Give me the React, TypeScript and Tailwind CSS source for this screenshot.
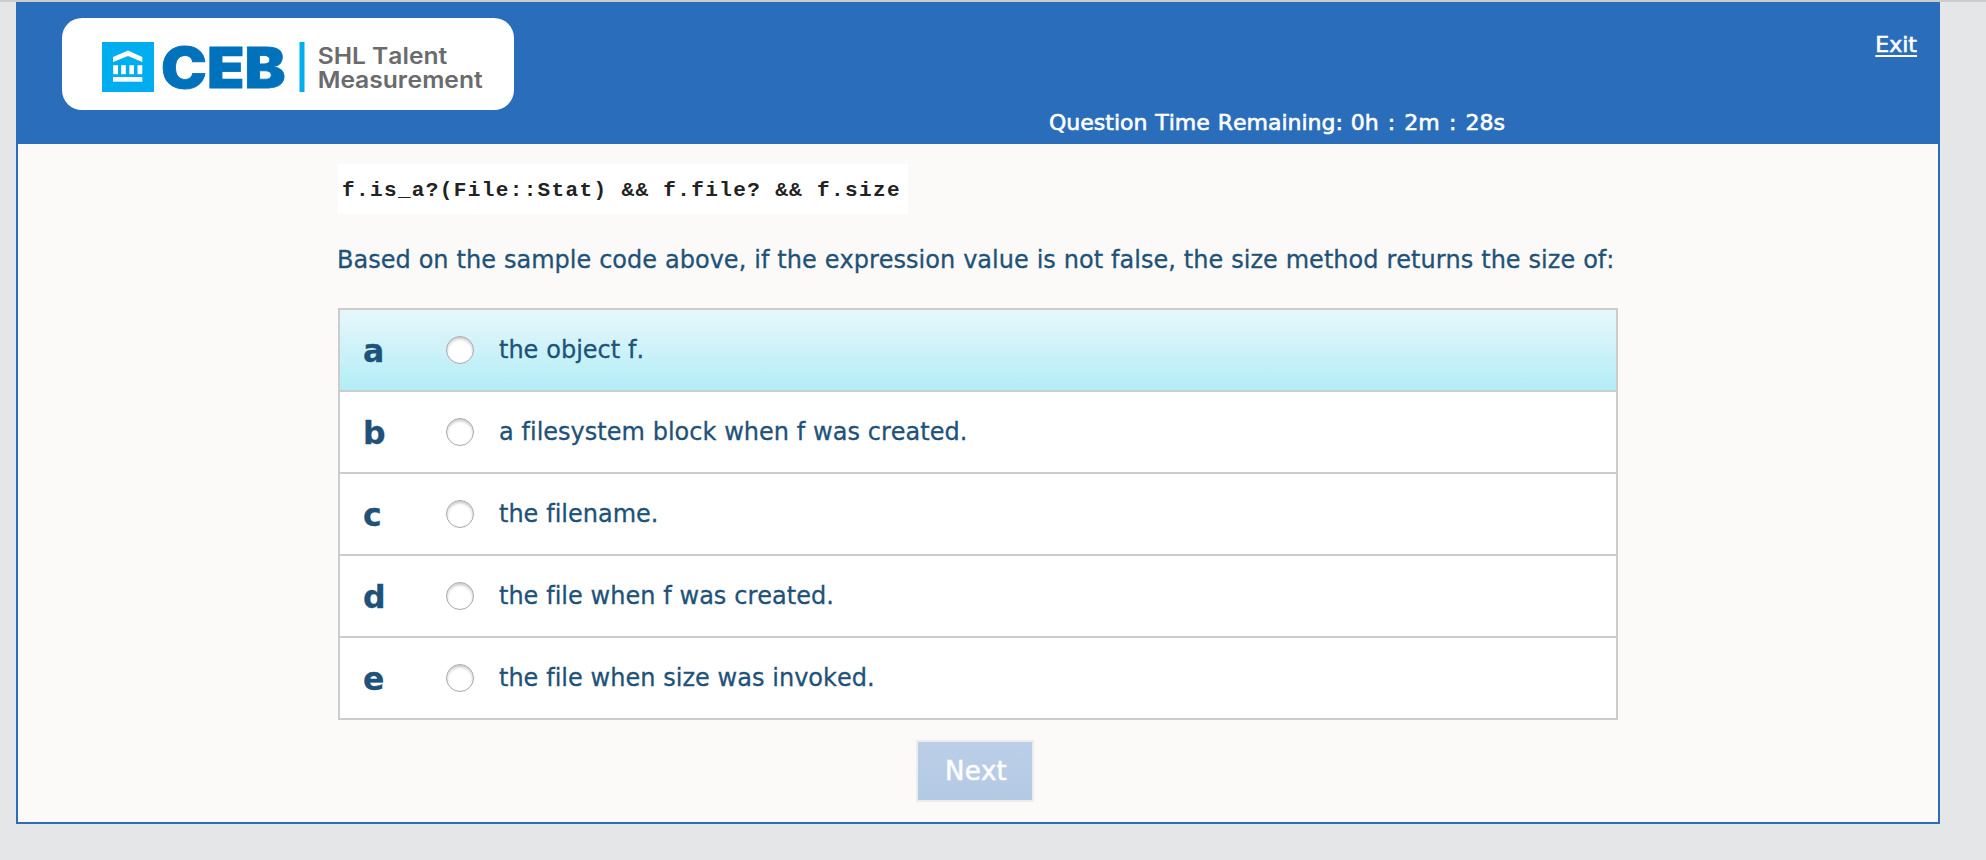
type Option = { key: string; text: string; selected?: boolean };

const options: Option[] = [
  { key: "a", text: "the object f.", selected: true },
  { key: "b", text: "a filesystem block when f was created." },
  { key: "c", text: "the filename." },
  { key: "d", text: "the file when f was created." },
  { key: "e", text: "the file when size was invoked." },
];

function Logo() {
  return (
    <div className="ml-[46px] mt-[16px] h-[92px] w-[452px] rounded-[20px] bg-white">
      <svg width="452" height="92" viewBox="62 18 452 92" role="img" aria-label="CEB SHL Talent Measurement">
        <rect x="102" y="42" width="52" height="50" fill="#00aeef" />
        <g fill="#fff">
          <path d="M128 50.5 L142.3 57 V62 L128 56 L113 62 V57 Z" />
          <rect x="113.2" y="65.2" width="4.8" height="9" />
          <rect x="121.2" y="65.2" width="4.6" height="9" />
          <rect x="129.4" y="65.2" width="4.6" height="9" />
          <rect x="137.5" y="65.2" width="4.8" height="9" />
          <rect x="113" y="77" width="29.3" height="4.7" />
        </g>
        <g fontFamily="Inter, sans-serif">
          <text x="161" y="87.7" fontSize="56" fontWeight="900" fill="#0072bc" stroke="#0072bc" strokeWidth="0.8" textLength="124.5" lengthAdjust="spacingAndGlyphs">CEB</text>
          <g fontSize="23" fontWeight="600" fill="#6a6b6d">
            <text x="317.7" y="63.7" textLength="129.5" lengthAdjust="spacingAndGlyphs">SHL Talent</text>
            <text x="317.7" y="88.3" textLength="165" lengthAdjust="spacingAndGlyphs">Measurement</text>
          </g>
        </g>
        <rect x="299.5" y="42" width="5" height="50" fill="#00aeef" />
      </svg>
    </div>
  );
}

function Radio() {
  return (
    <span className="ml-[54px] size-[28px] shrink-0 rounded-full border border-[#a9a9a9] bg-white shadow-[inset_0_2px_3px_rgba(0,0,0,0.22)]" />
  );
}

export default function App() {
  return (
    <div className="h-[860px] w-[1986px] overflow-hidden border-t-2 border-[#cccccc] bg-[#e5e6e8] pl-4 font-['DejaVu_Sans',Verdana,sans-serif] [font-kerning:none] [font-variant-ligatures:none]">
      <div className="flex h-[822px] w-[1924px] flex-col border-x-2 border-b-2 border-[#2a6ebb] bg-[#fbfaf8]">
        <header className="-mx-[2px] flex h-[142px] shrink-0 flex-col bg-[#2a6ebb] text-[22px] text-white [-webkit-text-stroke:0.6px_#fff]">
          <div className="flex h-[108px] justify-between">
            <Logo />
            <a className="mr-[23px] mt-[23px] h-[40px] leading-[40px] underline decoration-2 underline-offset-[3px]">Exit</a>
          </div>
          <div className="-mt-px ml-[1033px] whitespace-nowrap leading-[28px] [word-spacing:0.9px]">
            Question Time Remaining: <span className="[word-spacing:2.1px]">0h : 2m : 28s</span>
          </div>
        </header>
        <main className="ml-[320px] flex w-[1280px] flex-col items-start text-[24px] text-[#1f5278] [-webkit-text-stroke:0.3px_#1f5278]">
          <pre className="mt-[20px] h-[50px] w-[570px] bg-white pl-[4px] font-['Liberation_Mono',monospace] text-[21px] font-bold leading-[53px] tracking-[1.37px] text-[#222] [-webkit-text-stroke:0]">{"f.is_a?(File::Stat) && f.file? && f.size"}</pre>
          <p className="-ml-px mt-[30px] whitespace-nowrap leading-[32px] [word-spacing:0.36px]">
            Based on the sample code above, if the expression value is not false, the size method returns the size of:
          </p>
          <ul className="mt-[32px] w-[1280px] border-2 border-b-0 border-[#cccccc]">
            {options.map((o) => (
              <li
                key={o.key}
                className={
                  "flex h-[82px] items-center border-b-2 border-[#cccccc] " +
                  (o.selected ? "bg-gradient-to-b from-[#e6f7fb] to-[#b2edf6]" : "bg-white")
                }
              >
                <span className="ml-[23px] w-[29px] pt-[2px] text-[31.5px] font-bold leading-[40px]">{o.key}</span>
                <Radio />
                <span className="ml-[25px] whitespace-nowrap leading-[32px] [word-spacing:0.2px]">{o.text}</span>
              </li>
            ))}
          </ul>
          <button className="ml-[578px] mt-[20px] h-[62px] w-[118px] border-2 border-[#ececea] bg-gradient-to-b from-[#bdcfe8] to-[#b3c9e4] pl-[2px] text-[26px] leading-[40px] tracking-[0.2px] text-[#fdfdfd] [-webkit-text-stroke:0.6px_#fdfdfd]">
            Next
          </button>
        </main>
      </div>
    </div>
  );
}
